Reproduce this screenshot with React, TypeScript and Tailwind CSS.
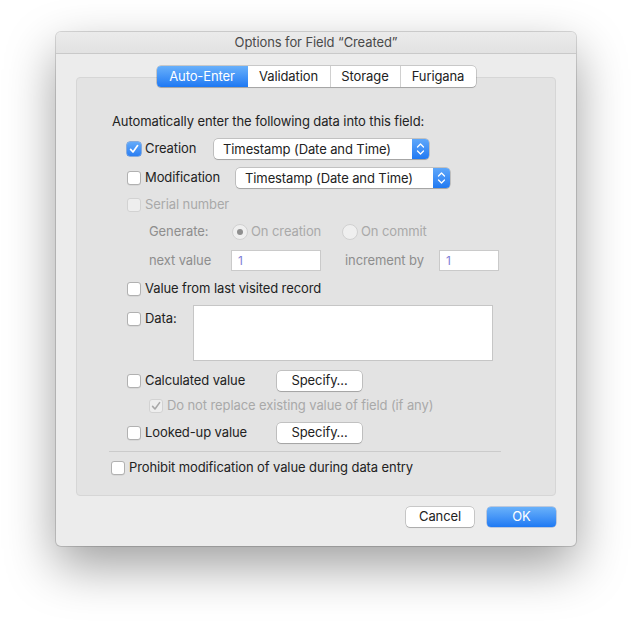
import React from "react"

const font = { fontFamily: "Inter, 'Noto Sans', sans-serif" }

function Check({ checked = false, disabled = false }: { checked?: boolean; disabled?: boolean }) {
  if (checked && !disabled) {
    return (
      <span className="inline-flex h-[14px] w-[14px] shrink-0 items-center justify-center rounded-[3px] bg-gradient-to-b from-[#63aaf9] to-[#2a7ef3] shadow-[0_0_0_0.5px_#2d74d6]">
        <svg width="12" height="12" viewBox="0 0 12 12">
          <path d="M2.6 6.4 L5 9 L9.6 2.6" fill="none" stroke="white" strokeWidth="1.7" strokeLinecap="round" strokeLinejoin="round" />
        </svg>
      </span>
    )
  }
  return (
    <span
      className={`inline-flex h-[14px] w-[14px] shrink-0 items-center justify-center rounded-[3px] border ${
        disabled ? "border-[#d2d2d2] bg-[#eeeeee]" : "border-[#b1b1b1] bg-white shadow-[0_0.5px_0.5px_rgba(0,0,0,0.1)]"
      }`}
    >
      {checked && (
        <svg width="12" height="12" viewBox="0 0 12 12">
          <path d="M2.6 6.4 L5 9 L9.6 2.6" fill="none" stroke="#a8a8a8" strokeWidth="1.6" strokeLinecap="round" strokeLinejoin="round" />
        </svg>
      )}
    </span>
  )
}

function Radio({ selected = false }: { selected?: boolean }) {
  return (
    <span className="inline-flex h-[16px] w-[16px] shrink-0 items-center justify-center rounded-full border border-[#d0d0d0] bg-[#efefef]">
      {selected && <span className="h-[6px] w-[6px] rounded-full bg-[#8f8f8f]" />}
    </span>
  )
}

function Popup({ label, width }: { label: string; width: string }) {
  return (
    <div className={`flex h-[20px] ${width} items-stretch overflow-hidden rounded-[4px] bg-white shadow-[0_0_0_0.5px_rgba(0,0,0,0.3),0_1px_1px_rgba(0,0,0,0.15)]`}>
      <span className="flex-1 pl-[9px] text-[13px] leading-[20px] text-[#222]">{label}</span>
      <span className="flex w-[17px] items-center justify-center bg-gradient-to-b from-[#5ea7fa] to-[#1f79f2]">
        <svg width="9" height="14" viewBox="0 0 9 14">
          <path d="M1.5 5 L4.5 2 L7.5 5" fill="none" stroke="white" strokeWidth="1.3" strokeLinecap="round" strokeLinejoin="round" />
          <path d="M1.5 9 L4.5 12 L7.5 9" fill="none" stroke="white" strokeWidth="1.3" strokeLinecap="round" strokeLinejoin="round" />
        </svg>
      </span>
    </div>
  )
}

function PushButton({ label, className = "" }: { label: string; className?: string }) {
  return (
    <div className={`flex h-[20px] items-center justify-center rounded-[4px] bg-white text-[13px] text-[#222] shadow-[0_0_0_0.5px_rgba(0,0,0,0.3),0_1px_1px_rgba(0,0,0,0.15)] ${className}`}>
      {label}
    </div>
  )
}

export default function App() {
  const tabs = [
    { name: "Auto-Enter", w: "w-[91px]", active: true },
    { name: "Validation", w: "w-[82px]" },
    { name: "Storage", w: "w-[70px]" },
    { name: "Furigana", w: "w-[76px]" },
  ]

  return (
    <div className="h-[626px] w-[632px] bg-white pl-[56px] pt-[32px] tracking-[-0.1px]" style={font}>
      <div className="flex h-[514px] w-[520px] flex-col overflow-hidden rounded-[5px] bg-[#ececec] shadow-[0_20px_50px_rgba(0,0,0,0.38),0_0_0_1px_rgba(0,0,0,0.14)]">
        {/* title bar */}
        <div className="flex h-[22px] shrink-0 items-center justify-center border-b border-[#c9c9c9] bg-gradient-to-b from-[#ebebeb] to-[#e2e2e2] text-[13px] text-[#4a4a4a]">
          Options for Field “Created”
        </div>

        {/* tabs */}
        <div className="relative z-10 mt-[12px] flex justify-center">
          <div className="flex h-[21px] overflow-hidden rounded-[4px] bg-white shadow-[0_0_0_0.5px_rgba(0,0,0,0.3),0_1px_1px_rgba(0,0,0,0.15)]">
            {tabs.map((t, i) => (
              <div
                key={t.name}
                className={`flex items-center justify-center text-[13px] ${t.w} ${
                  t.active
                    ? "bg-gradient-to-b from-[#68b0fa] to-[#1c78f3] text-white"
                    : "text-[#222]"
                } ${i > 1 ? "border-l border-[#d0d0d0]" : ""}`}
              >
                {t.name}
              </div>
            ))}
          </div>
        </div>

        {/* group box */}
        <div className="mx-[20px] -mt-[10px] flex h-[419px] flex-col rounded-[4px] border border-[#d6d6d6] bg-[#e3e3e3] pt-[35px] text-[13px] text-[#222]">
          <div className="h-[16px] pl-[35px] leading-[16px]">Automatically enter the following data into this field:</div>

          <div className="mt-[10px] flex h-[20px] items-center pl-[50px]">
            <Check checked />
            <span className="ml-[4px] w-[69px]">Creation</span>
            <Popup label="Timestamp (Date and Time)" width="w-[215px]" />
          </div>

          <div className="mt-[9px] flex h-[20px] items-center pl-[50px]">
            <Check />
            <span className="ml-[4px] w-[91px]">Modification</span>
            <Popup label="Timestamp (Date and Time)" width="w-[214px]" />
          </div>

          <div className="mt-[9px] flex h-[16px] items-center pl-[50px] text-[#a9a9a9]">
            <Check disabled />
            <span className="ml-[4px]">Serial number</span>
          </div>

          <div className="mt-[11px] flex h-[16px] items-center pl-[72px] text-[#a9a9a9]">
            <span className="w-[83px] text-[#8e8e8e]">Generate:</span>
            <Radio selected />
            <span className="ml-[3px] w-[91px]">On creation</span>
            <Radio />
            <span className="ml-[3px]">On commit</span>
          </div>

          <div className="mt-[10px] flex h-[21px] items-center pl-[72px] text-[#8e8e8e]">
            <span className="w-[82px]">next value</span>
            <div className="h-[21px] w-[90px] border border-[#cacaca] bg-white pl-[6px] text-[12px] leading-[19px] text-[#8080d6]">1</div>
            <span className="ml-[24px] w-[94px]">increment by</span>
            <div className="h-[21px] w-[60px] border border-[#cacaca] bg-white pl-[6px] text-[12px] leading-[19px] text-[#8080d6]">1</div>
          </div>

          <div className="mt-[10px] flex h-[16px] items-center pl-[50px]">
            <Check />
            <span className="ml-[4px]">Value from last visited record</span>
          </div>

          <div className="mt-[8px] flex items-start pl-[50px]">
            <div className="mt-[4px] flex items-center">
              <Check />
              <span className="ml-[4px] w-[48px]">Data:</span>
            </div>
            <div className="h-[56px] w-[300px] border border-[#c6c6c6] bg-white" />
          </div>

          <div className="mt-[10px] flex h-[20px] items-center pl-[50px]">
            <Check />
            <span className="ml-[4px] w-[132px]">Calculated value</span>
            <PushButton label="Specify…" className="w-[85px]" />
          </div>

          <div className="mt-[7px] flex h-[16px] items-center pl-[72px] text-[#a9a9a9]">
            <Check checked disabled />
            <span className="ml-[4px]">Do not replace existing value of field (if any)</span>
          </div>

          <div className="mt-[9px] flex h-[20px] items-center pl-[50px]">
            <Check />
            <span className="ml-[4px] w-[132px]">Looked-up value</span>
            <PushButton label="Specify…" className="w-[85px]" />
          </div>

          <div className="ml-[32px] mt-[8px] h-px w-[392px] bg-[#cbcbcb]" />

          <div className="mt-[8px] flex h-[16px] items-center pl-[34px]">
            <Check />
            <span className="ml-[4px]">Prohibit modification of value during data entry</span>
          </div>
        </div>

        {/* footer buttons */}
        <div className="mr-[20px] mt-[11px] flex justify-end gap-[13px]">
          <PushButton label="Cancel" className="w-[68px]" />
          <div className="flex h-[20px] w-[69px] items-center justify-center rounded-[4px] bg-gradient-to-b from-[#69b1fa] to-[#1d79f3] text-[13px] text-white shadow-[0_0_0_0.5px_rgba(0,60,160,0.4)]">
            OK
          </div>
        </div>
      </div>
    </div>
  )
}
